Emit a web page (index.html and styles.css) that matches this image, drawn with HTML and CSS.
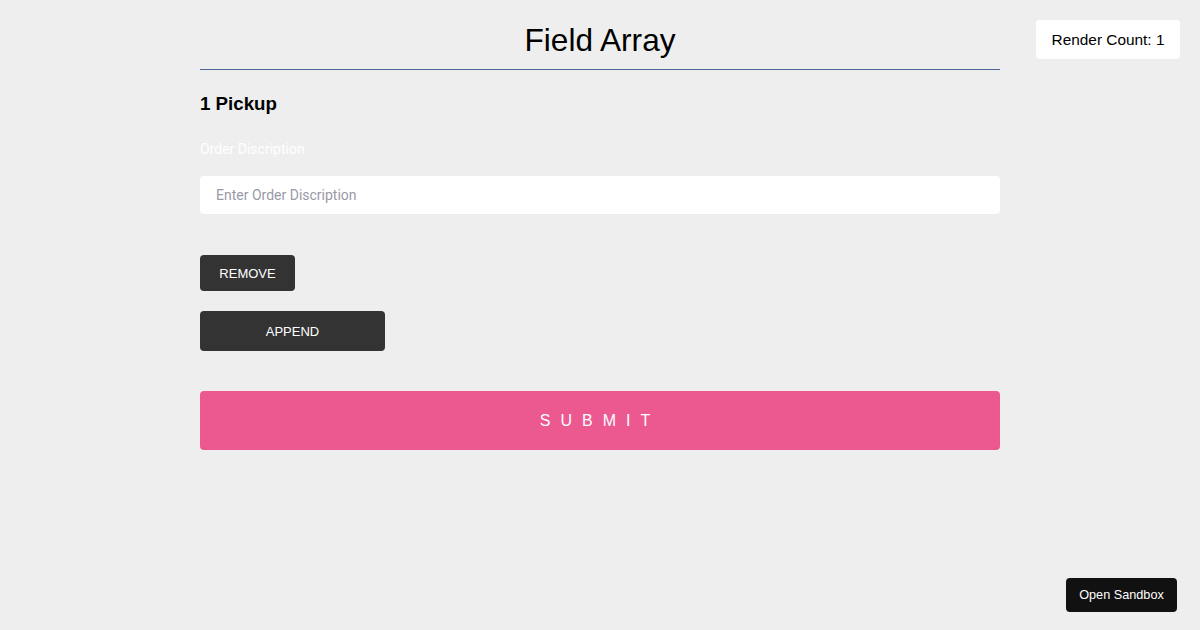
FILE: index.html
```html
<!DOCTYPE html>
<html lang="en">
<head>
  <meta charset="UTF-8" />
  <title>Field Array</title>
  <link rel="stylesheet" href="styles.css">
</head>
<body>
  <div class="render-count">Render Count: 1</div>

  <form class="field-form">
    <h1 class="form-title">Field Array</h1>

    <section class="field-item">
      <h4 class="item-title">1 Pickup</h4>
      <label class="field-label" for="order-1">Order Discription</label>
      <input type="text" id="order-1" class="field-input" placeholder="Enter Order Discription" />
      <button type="button" class="btn btn-remove">REMOVE</button>
    </section>

    <button type="button" class="btn btn-append">APPEND</button>
    <button type="submit" class="btn-submit">SUBMIT</button>
  </form>

  <a href="#" class="sandbox-link">Open Sandbox</a>
</body>
</html>
```

FILE: styles.css
```css
*, *::before, *::after {
  box-sizing: border-box;
}

body {
  margin: 0;
  min-height: 100vh;
  background: #eee;
  color: #000;
  font-family: "Liberation Sans", Arial, sans-serif;
}

.field-form {
  width: 800px;
  margin: 0 auto;
  display: flex;
  flex-direction: column;
  align-items: flex-start;
}

.form-title {
  align-self: stretch;
  margin: 20px 0 0;
  padding-bottom: 9px;
  font-size: 31.6px;
  line-height: 40px;
  font-weight: 400;
  text-align: center;
  border-bottom: 1px solid #4f6294;
}

.field-item {
  align-self: stretch;
  display: flex;
  flex-direction: column;
  align-items: flex-start;
}

.item-title {
  margin: 22px 0 0;
  font-size: 18.72px;
  line-height: 24px;
  font-weight: 700;
}

.field-label {
  margin-top: 23px;
  font-family: Roboto, "Liberation Sans", sans-serif;
  font-size: 14px;
  line-height: 20px;
  color: #fff;
}

.field-input {
  align-self: stretch;
  margin-top: 17px;
  height: 38px;
  padding: 0 16px;
  border: none;
  border-radius: 4px;
  background: #fff;
  font-family: Roboto, "Liberation Sans", sans-serif;
  font-size: 14px;
  color: #000;
}

.field-input::placeholder {
  color: #9a9aa6;
}

.btn {
  border: none;
  border-radius: 4px;
  background: #333;
  color: #fff;
  font-family: "Liberation Sans", Arial, sans-serif;
  font-size: 13px;
  cursor: pointer;
}

.btn-remove {
  margin-top: 41px;
  width: 95px;
  height: 36px;
}

.btn-append {
  margin-top: 20px;
  width: 185px;
  height: 40px;
}

.btn-submit {
  align-self: stretch;
  margin-top: 40px;
  height: 59px;
  border: none;
  border-radius: 4px;
  background: #ec5990;
  color: #fff;
  font-family: "Liberation Sans", Arial, sans-serif;
  font-size: 16px;
  letter-spacing: 10px;
  cursor: pointer;
}

.render-count {
  position: fixed;
  top: 20px;
  right: 20px;
  width: 144px;
  height: 39px;
  display: flex;
  align-items: center;
  justify-content: center;
  background: #fff;
  border-radius: 4px;
  font-size: 15.4px;
}

.sandbox-link {
  position: fixed;
  right: 23px;
  bottom: 18px;
  width: 111px;
  height: 34px;
  display: flex;
  align-items: center;
  justify-content: center;
  background: #111;
  border-radius: 4px;
  color: #fff;
  text-decoration: none;
  font-size: 12.7px;
}
```
